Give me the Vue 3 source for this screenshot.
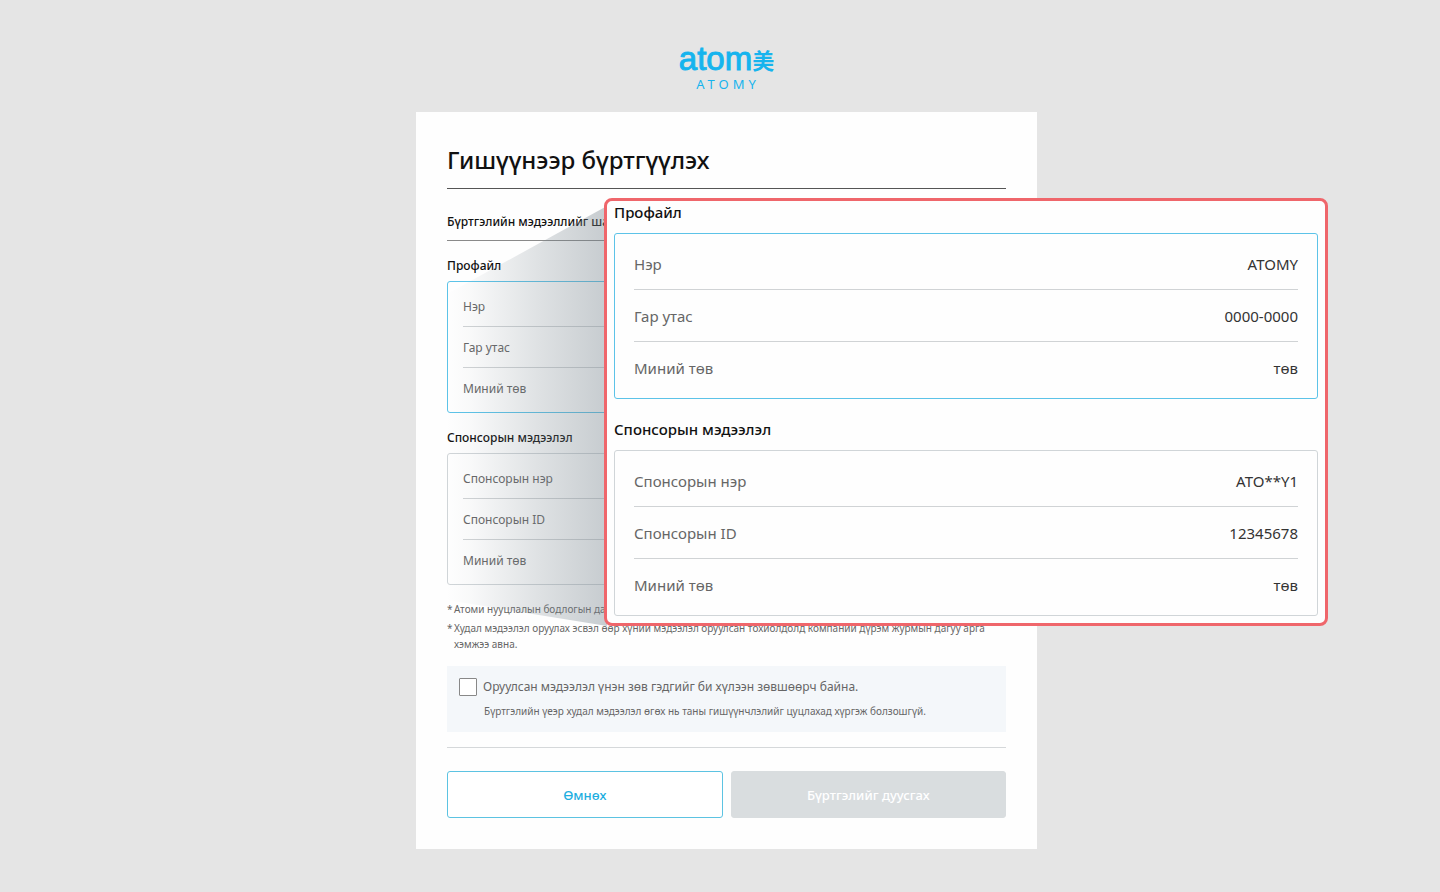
<script setup>
const groups = [
  {
    id: 'profile',
    title: 'Профайл',
    active: true,
    rows: [
      ['Нэр', 'ATOMY'],
      ['Гар утас', '0000-0000'],
      ['Миний төв', 'төв'],
    ],
  },
  {
    id: 'sponsor',
    title: 'Спонсорын мэдээлэл',
    active: false,
    rows: [
      ['Спонсорын нэр', 'ATO**Y1'],
      ['Спонсорын ID', '12345678'],
      ['Миний төв', 'төв'],
    ],
  },
]
</script>

<template>
  <div class="page">
    <header class="logo">
      <div class="wordmark"><span class="latin">atom</span><span class="han">美</span></div>
      <div class="tagline">ATOMY</div>
    </header>

    <main class="card">
      <h1>Гишүүнээр бүртгүүлэх</h1>
      <p class="lead">Бүртгэлийн мэдээллийг ша</p>

      <section v-for="g in groups" :key="g.id" class="group">
        <h2>{{ g.title }}</h2>
        <dl class="box" :class="{ active: g.active }">
          <div v-for="r in g.rows" :key="r[0]" class="row">
            <dt>{{ r[0] }}</dt>
          </div>
        </dl>
      </section>

      <ul class="notes">
        <li>Атоми нууцлалын бодлогын да</li>
        <li>Худал мэдээлэл оруулах эсвэл өөр хүний мэдээлэл оруулсан тохиолдолд компаний дүрэм журмын дагуу арга хэмжээ авна.</li>
      </ul>

      <div class="consent">
        <div class="check">
          <input id="agree" type="checkbox" />
          <label for="agree">Оруулсан мэдээлэл үнэн зөв гэдгийг би хүлээн зөвшөөрч байна.</label>
        </div>
        <p>Бүртгэлийн үеэр худал мэдээлэл өгөх нь таны гишүүнчлэлийг цуцлахад хүргэж болзошгүй.</p>
      </div>

      <div class="actions">
        <button type="button" class="prev">Өмнөх</button>
        <button type="button" class="done" disabled>Бүртгэлийг дуусгах</button>
      </div>

      <svg class="beam" viewBox="0 0 160 420" aria-hidden="true">
        <defs>
          <linearGradient id="beamFill" x1="0" x2="1" y1="0" y2="0">
            <stop offset="0" stop-color="#74818a" stop-opacity="0" />
            <stop offset="0.15" stop-color="#74818a" stop-opacity="0.04" />
            <stop offset="0.6" stop-color="#74818a" stop-opacity="0.24" />
            <stop offset="1" stop-color="#74818a" stop-opacity="0.4" />
          </linearGradient>
        </defs>
        <path d="M160 0 L0 88 V394 L160 420 Z" fill="url(#beamFill)" />
      </svg>

      <aside class="zoom">
        <section v-for="g in groups" :key="g.id" class="group">
          <h2>{{ g.title }}</h2>
          <dl class="box" :class="{ active: g.active }">
            <div v-for="r in g.rows" :key="r[0]" class="row">
              <dt>{{ r[0] }}</dt>
              <dd>{{ r[1] }}</dd>
            </div>
          </dl>
        </section>
      </aside>
    </main>
  </div>
</template>

<style>
body {
  background: #e5e5e5;
}
</style>

<style scoped>
.page {
  box-sizing: border-box;
  min-height: 100vh;
  padding: 41px 0 43px 13px;
  background: #e5e5e5;
  font-family: "Noto Sans", "Noto Sans CJK SC", sans-serif;
  color: #111;
}
h1, h2, p, dl, dt, dd, ul {
  margin: 0;
  padding: 0;
}
.logo {
  height: 71px;
  color: #16b4ee;
  text-align: center;
}
.wordmark {
  display: flex;
  justify-content: center;
  align-items: center;
  height: 36px;
}
.latin {
  font: 33px/36px "Liberation Sans", sans-serif;
  -webkit-text-stroke: 1px #16b4ee;
}
.han {
  font: 700 22px/36px "Noto Sans CJK SC", sans-serif;
}
.tagline {
  padding-left: 3px;
  font-size: 13px;
  line-height: 14px;
  letter-spacing: 4px;
}
.card {
  position: relative;
  box-sizing: border-box;
  width: 621px;
  max-width: 100%;
  margin: 0 auto;
  padding: 30px 31px 31px;
  background: #fefefe;
}
h1 {
  padding-bottom: 10px;
  border-bottom: 1px solid #555;
  font-size: 24px;
  line-height: 36px;
  font-weight: 500;
}
.lead {
  padding: 22px 0 8px;
  border-bottom: 1px solid #8a8a8a;
  font-size: 12px;
  line-height: 21px;
  font-weight: 500;
}
.group h2 {
  padding: 15px 0 5px;
  font-size: 12px;
  line-height: 20px;
  font-weight: 500;
}
.box {
  padding: 4px 15px 3px;
  border: 1px solid #d0d5d8;
  border-radius: 3px;
}
.box.active {
  border-color: #5cc3e8;
}
.row {
  display: flex;
  justify-content: space-between;
  align-items: center;
  box-sizing: border-box;
  height: 41px;
  border-bottom: 1px solid #d0d3d5;
  font-size: 12px;
  color: #666;
}
.row:last-child {
  border-bottom: 0;
}
.notes {
  padding-top: 16px;
  list-style: none;
  font-size: 10px;
  line-height: 16px;
  color: #666;
}
.notes li {
  position: relative;
  padding-left: 7px;
  margin-bottom: 3px;
}
.notes li::before {
  content: "*";
  position: absolute;
  left: 0;
}
.consent {
  margin-top: 14px;
  padding: 11px 12px;
  background: #f4f7fa;
  color: #666;
}
.check {
  display: flex;
  align-items: center;
  gap: 6px;
  font-size: 12px;
  line-height: 20px;
}
.check input {
  appearance: none;
  box-sizing: border-box;
  width: 18px;
  height: 18px;
  margin: 0;
  border: 1px solid #888;
  border-radius: 1px;
  background: #fff;
}
.consent p {
  padding: 6px 0 2px 25px;
  font-size: 10px;
  line-height: 16px;
}
.actions {
  display: grid;
  grid-template-columns: 1fr 1fr;
  gap: 8px;
  margin-top: 15px;
  padding-top: 23px;
  border-top: 1px solid #d5d8da;
}
.actions button {
  height: 47px;
  border: 1px solid #5cc3e2;
  border-radius: 3px;
  background: #fff;
  color: #1eaee0;
  font: 500 13px "Noto Sans", sans-serif;
}
.actions .done {
  border-color: #d9dddf;
  background: #d9dddf;
  color: #fff;
}
.beam {
  position: absolute;
  top: 94px;
  left: 31px;
  width: 160px;
  height: 420px;
}
.zoom {
  position: absolute;
  top: 86px;
  left: 188px;
  box-sizing: border-box;
  width: 724px;
  padding: 0 7px 7px;
  border: 3px solid #ef666b;
  border-radius: 8px;
  background: #fefefe;
}
.zoom .group h2 {
  padding: 0 0 10px;
  font-size: 15px;
  line-height: 22px;
}
.zoom .group + .group h2 {
  padding-top: 19px;
}
.zoom .box {
  padding: 4px 19px;
}
.zoom .row {
  height: 52px;
  font-size: 15px;
}
.zoom dd {
  color: #333;
}
</style>
